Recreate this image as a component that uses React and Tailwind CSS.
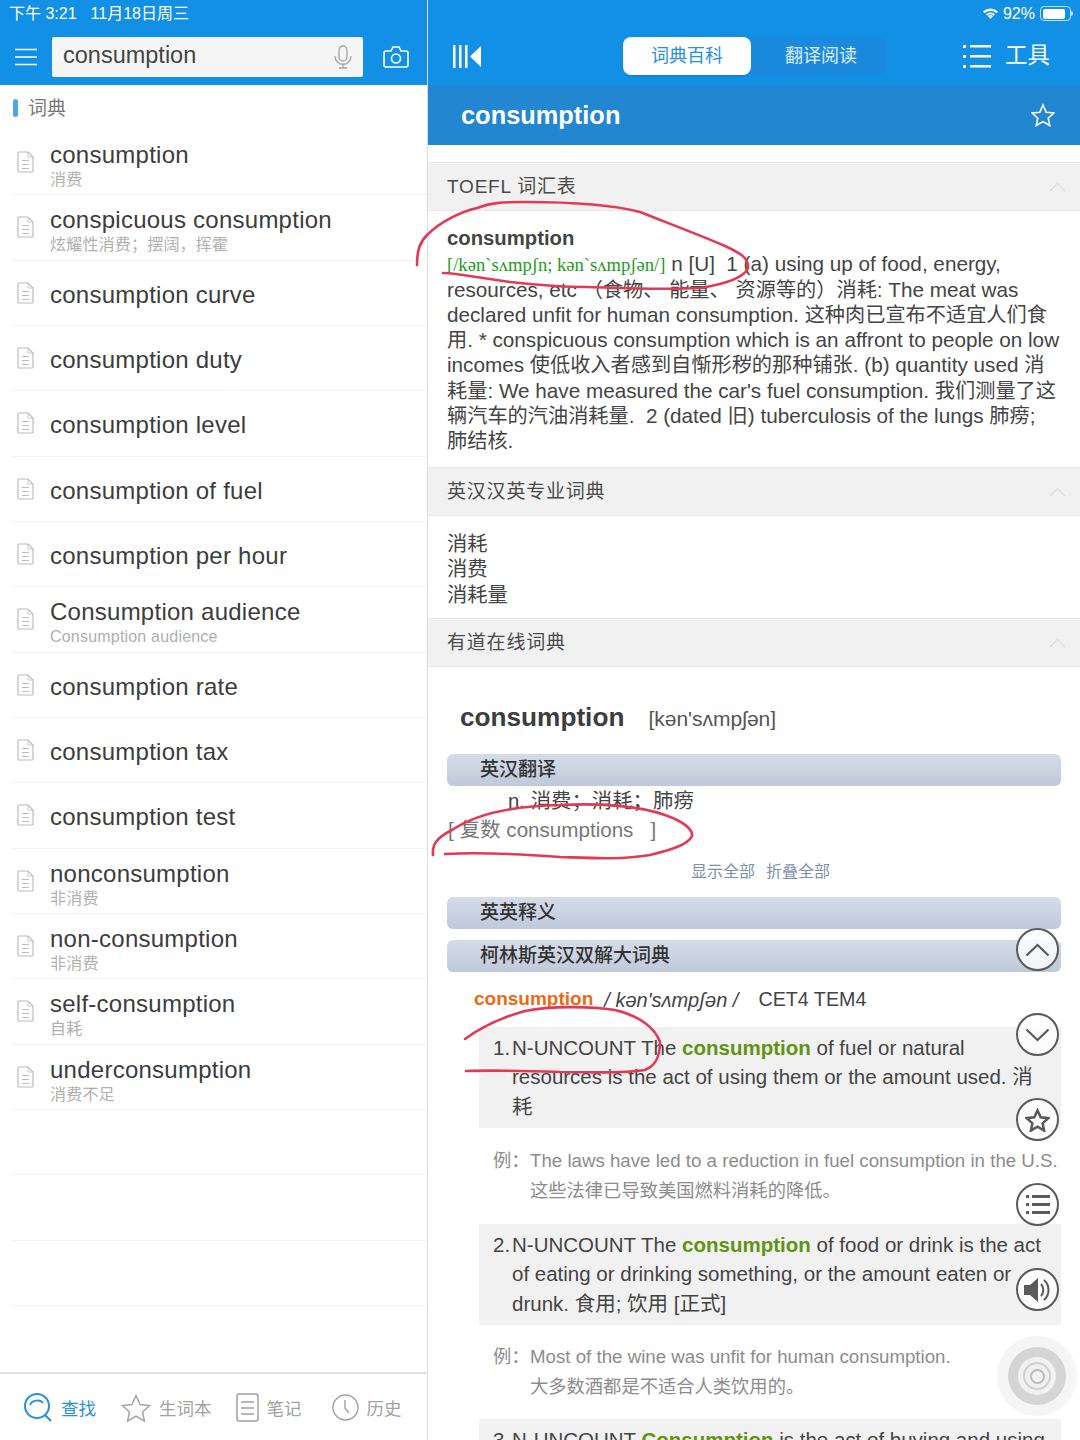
const CJK = "font-['Liberation_Sans','Noto_Sans_CJK_SC',sans-serif]";

const rows = [
  ["consumption", "消费"],
  ["conspicuous consumption", "炫耀性消费；摆阔，挥霍"],
  ["consumption curve"],
  ["consumption duty"],
  ["consumption level"],
  ["consumption of fuel"],
  ["consumption per hour"],
  ["Consumption audience", "Consumption audience"],
  ["consumption rate"],
  ["consumption tax"],
  ["consumption test"],
  ["nonconsumption", "非消费"],
  ["non-consumption", "非消费"],
  ["self-consumption", "自耗"],
  ["underconsumption", "消费不足"],
];

function DocIcon() {
  return (
    <svg width="17" height="22" viewBox="0 0 17 22" fill="none" stroke="#bcbcbc" strokeWidth="1.2" className="shrink-0">
      <path d="M1 2a1 1 0 0 1 1-1h9l5 5v14a1 1 0 0 1-1 1H2a1 1 0 0 1-1-1z" />
      <path d="M11 1v5h5" strokeWidth="0.8" />
      <path d="M5 9.500h7M5 13.500h7M5 17.500h7" />
    </svg>
  );
}

function Row({ title, sub }) {
  return (
    <div className="h-[65.33px] shrink-0 ml-3 border-b border-[#f3f3f3] flex items-center">
      {title && <div className="w-[38px] pl-[5px] flex items-center"><DocIcon /></div>}
      {title && (
        <div className="flex flex-col pt-[4px]">
          <div className="text-[24px] leading-[28px] text-[#3c3c3c] tracking-[0.25px]">{title}</div>
          {sub && <div className="text-[16px] leading-[18px] text-[#b0b0b0] tracking-[0.2px] translate-y-[2px]">{sub}</div>}
        </div>
      )}
    </div>
  );
}

function TabItem({ label, active, icon }) {
  return (
    <div className="flex items-center gap-[8px]">
      {icon}
      <span className={`text-[17.5px] pt-[3px] ${active ? "text-[#2a8fdc]" : "text-[#a2a2a2]"}`}>{label}</span>
    </div>
  );
}

function SectionHead({ label }) {
  return (
    <div className="h-[49px] shrink-0 bg-[#f1f1f1] border-y border-[#e9e9e9] flex items-center justify-between pl-[19px] pr-[14px]">
      <span className="text-[19px] pt-[1px] text-[#4a4a4a] tracking-[0.8px]">{label}</span>
      <svg width="17" height="10" viewBox="0 0 17 10" fill="none" stroke="#dedede" strokeWidth="1.4"><path d="M1 9l7.500-7.500L16 9" /></svg>
    </div>
  );
}

function BlueBar({ label, className = "" }) {
  return (
    <div className={`h-[32px] shrink-0 ml-[19px] mr-[19px] pt-[1px] rounded-[6px] bg-gradient-to-b from-[#d6dce8] to-[#bfc9da] flex items-center pl-[33px] text-[19px] font-medium text-[#333] ${className}`}>
      {label}
    </div>
  );
}

function FloatBtn({ children }) {
  return (
    <div className="w-[43px] h-[43px] rounded-full border-[2.5px] border-[#5a5a5a] bg-white/80 flex items-center justify-center">
      {children}
    </div>
  );
}

const G = ({ children }) => <b className="text-[#5f9413] font-bold">{children}</b>;

function Z({ text }) {
  const parts = text.split(/([\u3000-\u9fff\uff00-\uffef]+)/);
  return (
    <div className="h-[25.3px]">
      {parts.map((p, i) => (i % 2 ? <span key={i} className="text-[20.2px]">{p}</span> : <span key={i}>{p}</span>))}
    </div>
  );
}

function Sense({ n, lines }) {
  return (
    <div className="ml-[51px] mr-[19px] shrink-0 bg-[#f1f1f1] h-[101px] pt-[6px] pl-[14px] text-[20.5px] leading-[29.3px] text-[#444]">
      {lines.map((l, i) => (
        <div key={i} className="flex whitespace-nowrap">
          <span className="w-[19px] shrink-0">{i === 0 ? n : ""}</span>
          <span>{l}</span>
        </div>
      ))}
    </div>
  );
}

function Example({ en, zh, className }) {
  return (
    <div className={`ml-[65px] shrink-0 text-[18.3px] leading-[30px] text-[#8c8c8c] whitespace-nowrap ${className}`}>
      <div className="flex"><span className="w-[37px] shrink-0">例：</span><span className="text-[18.7px]">{en}</span></div>
      <div className="pl-[37px]">{zh}</div>
    </div>
  );
}

export default function App() {
  return (
    <div className={`relative w-[1080px] h-[1440px] overflow-hidden bg-white flex ${CJK}`}>
      {/* LEFT */}
      <div className="w-[428px] shrink-0 h-full flex flex-col border-r border-[#dcdcdc]">
        <div className="h-[85px] shrink-0 bg-[#1290e6] flex flex-col">
          <div className="h-[27px] pl-[9px] flex items-center text-[16px] text-white">
            <span>下午 3:21</span><span className="ml-[14px]">11月18日周三</span>
          </div>
          <div className="flex items-center pt-[10px]">
            <svg width="22" height="18" viewBox="0 0 22 18" stroke="#fff" strokeWidth="1.5" className="ml-[15px]"><path d="M0 1.500h22M0 9h22M0 16.500h22" /></svg>
            <div className="ml-[15px] w-[311px] h-[40px] rounded-[2px] bg-[#f5f5f5] flex items-center justify-between pl-[11px] pr-[11px]">
              <span className="text-[23.5px] pb-[3px] text-[#444]">consumption</span>
              <svg width="18" height="24" viewBox="0 0 18 24" fill="none" stroke="#a5a5a5" strokeWidth="1.3"><rect x="5" y="1" width="8" height="15" rx="4" /><path d="M1 11c0 11 16 11 16 0M9 19v4M5 23h8" /></svg>
            </div>
            <svg width="26" height="22" viewBox="0 0 26 22" fill="none" stroke="#fff" strokeWidth="1.6" className="ml-[20px]"><path d="M1 7a2 2 0 0 1 2-2h5l2-4h6l2 4h5a2 2 0 0 1 2 2v12a2 2 0 0 1-2 2H3a2 2 0 0 1-2-2z" /><circle cx="13" cy="12.500" r="4.500" /></svg>
          </div>
        </div>
        <div className="h-[45px] shrink-0 flex items-center pl-[13px]">
          <div className="w-[5px] h-[18px] rounded-full bg-[#4aa8f0]"></div>
          <span className="ml-[10px] pt-[3px] text-[19px] text-[#777]">词典</span>
        </div>
        <div className="flex-1 flex flex-col overflow-hidden">
          {rows.map((r) => <Row key={r[0]} title={r[0]} sub={r[1]} />)}
          <Row title="" /><Row title="" /><Row title="" />
        </div>
        <div className="h-[68px] shrink-0 border-t-2 border-[#e2e2e2] flex items-center pl-[23px] pt-[1px]">
          <TabItem label="查找" active icon={
            <svg width="30" height="30" viewBox="0 0 30 30" fill="none" stroke="#2a8fdc" strokeWidth="2"><circle cx="14" cy="13" r="12" /><path d="M7 12c2-5 10-6 13-2M22 22l6 6" /></svg>
          } />
          <div className="w-[25px]"></div>
          <TabItem label="生词本" icon={
            <svg width="30" height="28" viewBox="0 0 30 28" fill="none" stroke="#a5a5a5" strokeWidth="1.5"><path d="M15 1.500l4 9 9.500 1-7 6.500 2 9.200-8.500-5-8.500 5 2-9.200-7-6.500 9.500-1z" /></svg>
          } />
          <div className="w-[24px]"></div>
          <TabItem label="笔记" icon={
            <svg width="23" height="29" viewBox="0 0 23 29" fill="none" stroke="#a0a0a0" strokeWidth="1.5"><rect x="1" y="1" width="21" height="27" rx="2" /><path d="M5 9h13M5 15h13M5 21h13" /></svg>
          } />
          <div className="w-[30px]"></div>
          <TabItem label="历史" icon={
            <svg width="27" height="27" viewBox="0 0 27 27" fill="none" stroke="#a0a0a0" strokeWidth="1.400"><circle cx="13.500" cy="13.500" r="12.500" /><path d="M13 6v8l4 5" /></svg>
          } />
        </div>
      </div>

      {/* RIGHT */}
      <div className="flex-1 min-w-0 flex flex-col">
        <div className="h-[85px] shrink-0 bg-[#1290e6] flex flex-col">
          <div className="h-[27px] flex items-center justify-end pr-[7px] text-white text-[16px] gap-[5px]">
            <svg width="15" height="11" viewBox="0 0 15 11" fill="#fff"><path d="M7.500 11L5 8a4 4 0 0 1 5 0z" /><path d="M0 3.500a11 11 0 0 1 15 0l-1.500 1.700a9 9 0 0 0-12 0zM3 6.200a6.500 6.500 0 0 1 9 0l-1.300 1.500a4.700 4.700 0 0 0-6.400 0z" /></svg>
            <span>92%</span>
            <div className="flex items-center">
              <div className="w-[31px] h-[15px] rounded-[4px] border border-white/70 p-[1.5px]"><div className="w-[87%] h-full rounded-[2px] bg-white"></div></div>
              <div className="w-[2px] h-[5px] bg-white/70 rounded-r"></div>
            </div>
          </div>
          <div className="flex items-center h-[38px] mt-[10px] relative">
            <svg width="28" height="23" viewBox="0 0 28 23" fill="#fff" className="ml-[25px]"><path d="M0 0h2.500v23H0zM6 0h2.500v23H6zM12 0h2.500v23H12zM28 1v21L17 11.500z" /></svg>
            <div className="ml-[142px] w-[128px] h-[38px] rounded-[8px] bg-white shadow-sm flex items-center justify-center text-[18px] text-[#2a8fdc]">词典百科</div>
            <div className="w-[135px] h-[38px] pl-[5px] rounded-r-[8px] bg-[#1a8ade] flex items-center justify-center text-[18px] text-white/85">翻译阅读</div>
            <svg width="28" height="23" viewBox="0 0 28 23" fill="#fff" className="ml-[77px]"><path d="M0 0h3v3H0zM0 10h3v3H0zM0 20h3v3H0zM7 0h21v2.500H7zM7 10h21v2.500H7zM7 20h21v2.500H7z" /></svg>
            <span className="ml-[14px] text-[22.500px] text-white">工具</span>
          </div>
        </div>
        <div className="h-[60px] shrink-0 bg-[#2287d0] flex items-center justify-between pl-[33px] pr-[25px]">
          <span className="text-[25.4px] font-bold text-white">consumption</span>
          <svg width="24" height="24" viewBox="0 0 30 28" fill="none" stroke="#fff" strokeWidth="2"><path d="M15 1.500l4 9 9.500 1-7 6.500 2 9.200-8.500-5-8.500 5 2-9.200-7-6.500 9.500-1z" /></svg>
        </div>
        <div className="h-[17px] shrink-0"></div>

        <SectionHead label="TOEFL 词汇表" />
        <div className="h-[256px] shrink-0 pt-[15px] pl-[19px] text-[20.7px] leading-[25.2px] text-[#444] whitespace-nowrap">
          <div className="font-bold text-[20.3px] h-[25.3px]">consumption</div>
          <div className="h-[25.3px]"><span className="font-['Liberation_Serif',serif] text-[#1d9b1d] text-[18.6px]">[/kən`sʌmpʃn; kən`sʌmpʃən/]</span> n [U]&nbsp; 1 (a) using up of food, energy,</div>
          <Z text="resources, etc （食物、 能量、 资源等的）消耗: The meat was" />
          <Z text="declared unfit for human consumption. 这种肉已宣布不适宜人们食" />
          <Z text="用. * conspicuous consumption which is an affront to people on low" />
          <Z text="incomes 使低收入者感到自惭形秽的那种铺张. (b) quantity used 消" />
          <Z text="耗量: We have measured the car's fuel consumption. 我们测量了这" />
          <Z text={"辆汽车的汽油消耗量.\u00a0 2 (dated 旧) tuberculosis of the lungs 肺痨;"} />
          <Z text="肺结核." />
        </div>

        <SectionHead label="英汉汉英专业词典" />
        <div className="h-[102px] shrink-0 pt-[16px] pl-[19px] text-[20.3px] leading-[25.3px] text-[#444]">
          <div>消耗</div><div>消费</div><div>消耗量</div>
        </div>
        <SectionHead label="有道在线词典" />

        <div className="h-[87px] shrink-0 flex items-center pl-[32px] pt-[15px]">
          <span className="text-[26.2px] font-bold text-[#3d3d3d]">consumption</span>
          <span className="ml-[24px] text-[21px] pt-[1px] text-[#555]">[kən'sʌmpʃən]</span>
        </div>
        <BlueBar label="英汉翻译" />
        <div className="pl-[80px] h-[30px] shrink-0 flex items-center text-[20.4px] text-[#444]">n. 消费；消耗；肺痨</div>
        <div className="pl-[20px] h-[29px] shrink-0 flex items-center text-[20.6px] text-[#777] whitespace-pre">[ 复数 consumptions   ]</div>
        <div className="h-[52px] shrink-0 pt-[1px] pl-[13px] flex items-center justify-center gap-[11px] text-[16px] text-[#7d8fab]"><span>显示全部</span><span>折叠全部</span></div>
        <BlueBar label="英英释义" />
        <BlueBar label="柯林斯英汉双解大词典" className="mt-[11px]" />
        <div className="h-[55px] shrink-0 flex items-center pl-[46px] text-[20px] text-[#444] whitespace-pre">
          <span className="text-[19px] font-bold text-[#ec6a13]">consumption</span>
          <span className="ml-[11px] italic">/ kən'sʌmpʃən /</span>
          <span className="ml-[20px] text-[19.7px]">CET4 TEM4</span>
        </div>
        <Sense n="1." lines={[
          <>N-UNCOUNT The <G>consumption</G> of fuel or natural</>,
          <>resources is the act of using them or the amount used. 消</>,
          <>耗</>,
        ]} />
        <Example className="h-[96px] pt-[18px]" en="The laws have led to a reduction in fuel consumption in the U.S." zh="这些法律已导致美国燃料消耗的降低。" />
        <Sense n="2." lines={[
          <>N-UNCOUNT The <G>consumption</G> of food or drink is the act</>,
          <>of eating or drinking something, or the amount eaten or</>,
          <>drunk. 食用; 饮用 [正式]</>,
        ]} />
        <Example className="h-[94px] pt-[17px]" en="Most of the wine was unfit for human consumption." zh="大多数酒都是不适合人类饮用的。" />
        <Sense n="3." lines={[<>N-UNCOUNT <G>Consumption</G> is the act of buying and using</>]} />
      </div>

      {/* floating buttons */}
      <div className="absolute left-[1016px] top-[928px] flex flex-col gap-[42px]">
        <FloatBtn><svg width="25" height="14" viewBox="0 0 25 14" fill="none" stroke="#5a5a5a" strokeWidth="2.200"><path d="M1.500 12.500L12.500 2l11 10.500" /></svg></FloatBtn>
        <FloatBtn><svg width="25" height="14" viewBox="0 0 25 14" fill="none" stroke="#5a5a5a" strokeWidth="2.200"><path d="M1.500 1.500L12.500 12l11-10.500" /></svg></FloatBtn>
        <FloatBtn><svg width="25" height="24" viewBox="0 0 30 28" fill="none" stroke="#5a5a5a" strokeWidth="3"><path d="M15 2.500l3.800 8.300 9 1-6.700 6.200 1.900 8.800-8-4.700-8 4.700 1.900-8.800-6.700-6.200 9-1z" /></svg></FloatBtn>
        <FloatBtn><svg width="24" height="19" viewBox="0 0 24 19" fill="#5a5a5a"><path d="M0 0h3v3H0zM0 8h3v3H0zM0 16h3v3H0zM6 0h18v3H6zM6 8h18v3H6zM6 16h18v3H6z" /></svg></FloatBtn>
        <FloatBtn><svg width="28" height="26" viewBox="0 0 28 26" fill="none"><path d="M0 8h6l8-7v24l-8-7H0z" fill="#5a5a5a" /><path d="M17 7c3 3 3 9 0 12M20 3c6 5 6 15 0 20" stroke="#5a5a5a" strokeWidth="2" /></svg></FloatBtn>
      </div>
      <div className="absolute left-[997px] top-[1336px] w-[80px] h-[80px] rounded-full bg-[#f3f3f3]/85 flex items-center justify-center">
        <div className="w-[58px] h-[58px] rounded-full bg-[#d5d5d5] flex items-center justify-center">
          <div className="w-[38px] h-[38px] rounded-full bg-[#f1f1f1] flex items-center justify-center">
            <div className="w-[28px] h-[28px] rounded-full border-2 border-[#d0d0d0] bg-[#efefef] flex items-center justify-center">
              <div className="w-[15px] h-[15px] rounded-full border-2 border-[#bbbbbb] bg-[#f3f3f3]"></div>
            </div>
          </div>
        </div>
      </div>

      {/* ink annotations */}
      <svg className="absolute inset-0 pointer-events-none" width="1080" height="1440" viewBox="0 0 1080 1440" fill="none" stroke="#e23a55" strokeWidth="2.600" strokeLinecap="round">
        <path d="M417 265C417 250 420 242 427 235C440 222 460 212 477 208C490 203 500 202 525 202C570 202 610 204 640 212C665 222 700 235 725 246C740 253 749 258 748 268C744 278 725 284 700 288C660 290 620 288 587 287C560 287 537 285 510 282C490 279 470 276 463 275C455 274 450 273 443 273" />
        <path d="M433 855C432 845 436 838 452 830C470 818 500 806 560 805C600 803 640 806 665 815C685 822 693 830 692 836C688 845 670 850 650 855C620 860 590 858 560 857C520 854 480 852 445 854" />
        <path d="M465 1039C480 1028 500 1018 525 1011C550 1006 590 1006 615 1010C640 1016 655 1028 660 1042C660 1058 655 1066 645 1070C620 1074 590 1072 560 1072C530 1071 490 1070 466 1071" />
      </svg>
    </div>
  );
}
